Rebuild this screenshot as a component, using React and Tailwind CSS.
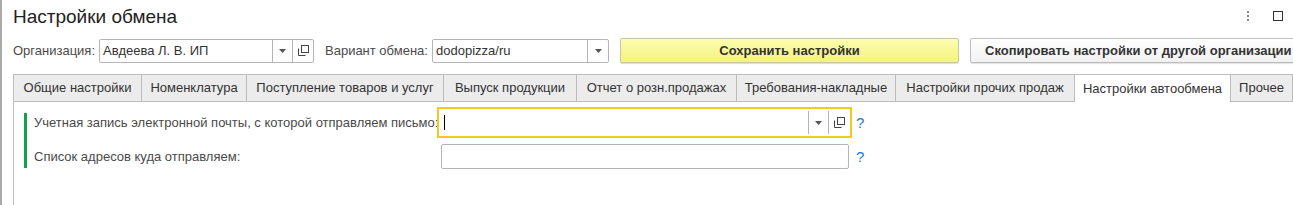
import React from "react";

const tabs = [
  { label: "Общие настройки", w: 129 },
  { label: "Номенклатура", w: 105 },
  { label: "Поступление товаров и услуг", w: 197 },
  { label: "Выпуск продукции", w: 133 },
  { label: "Отчет о розн.продажах", w: 160 },
  { label: "Требования-накладные", w: 159 },
  { label: "Настройки прочих продаж", w: 179 },
  { label: "Настройки автообмена", w: 156, active: true },
  { label: "Прочее", w: 62 },
];

function DropArrow() {
  return (
    <svg width="7" height="4" viewBox="0 0 7 4">
      <path d="M0 0h7L3.5 4z" fill="#555" />
    </svg>
  );
}

function OpenIcon() {
  return (
    <svg width="11" height="11" viewBox="0 0 11 11" fill="none" stroke="#444" strokeWidth="1">
      <rect x="3.5" y="0.5" width="7" height="7" />
      <path d="M0.5 3.5v7h7" />
    </svg>
  );
}

function Help({ className = "" }) {
  return <span className={"text-[15px] leading-none text-[#1c7ad0] " + className}>?</span>;
}

export default function App() {
  return (
    <div
      className="flex h-[205px] w-[1293px] flex-col overflow-hidden border-l-2 border-[#a9a9a9] bg-white pl-[11px] text-[13px] text-[#4a4a4a]"
      style={{ fontFamily: '"Liberation Sans", Arial, sans-serif' }}
    >
      <div className="flex h-[33px] shrink-0 items-center justify-between pr-[10px]">
        <h1 className="pt-[1px] text-[19px] text-[#222]">Настройки обмена</h1>
        <div className="flex items-center gap-[24px] pb-[1px]">
          <div className="flex flex-col gap-[2px]">
            <span className="h-[2px] w-[2px] bg-[#888]" />
            <span className="h-[2px] w-[2px] bg-[#888]" />
            <span className="h-[2px] w-[2px] bg-[#888]" />
          </div>
          <span className="h-[10px] w-[10px] border border-[#333]" />
        </div>
      </div>

      <div className="mt-[5px] flex h-[25px] shrink-0 items-center">
        <span className="w-[86px] shrink-0">Организация:</span>
        <div className="flex h-[24px] w-[215px] shrink-0 items-stretch rounded-[2px] border border-[#b5b5b5] bg-white">
          <span className="flex flex-1 items-center pl-[3px] text-[#333]">Авдеева Л. В. ИП</span>
          <span className="flex w-[20px] items-center justify-center border-l border-[#b5b5b5]">
            <DropArrow />
          </span>
          <span className="flex w-[21px] items-center justify-center border-l border-[#b5b5b5]">
            <OpenIcon />
          </span>
        </div>
        <span className="ml-[11px] w-[107px] shrink-0">Вариант обмена:</span>
        <div className="flex h-[24px] w-[177px] shrink-0 items-stretch rounded-[2px] border border-[#b5b5b5] bg-white">
          <span className="flex flex-1 items-center pl-[3px] text-[#333]">dodopizza/ru</span>
          <span className="flex w-[21px] items-center justify-center border-l border-[#b5b5b5]">
            <DropArrow />
          </span>
        </div>
        <button className="ml-[11px] h-[25px] w-[339px] shrink-0 rounded-[2px] border border-[#c8c8a0] bg-gradient-to-b from-[#fdfdb0] to-[#f3f37c] font-bold text-[#333] shadow-[0_1px_1px_rgba(0,0,0,0.15)]">
          Сохранить настройки
        </button>
        <button className="ml-[11px] h-[25px] w-[340px] shrink-0 whitespace-nowrap rounded-[2px] border border-[#bdbdbd] bg-gradient-to-b from-white to-[#f0f0f0] pl-[14px] text-left font-bold text-[#333] shadow-[0_1px_1px_rgba(0,0,0,0.12)]">
          Скопировать настройки от другой организации
        </button>
      </div>

      <div className="mt-[11px] flex h-[28px] shrink-0 items-stretch">
        {tabs.map((t, i) => (
          <div
            key={t.label}
            style={{ width: t.w }}
            className={
              "flex shrink-0 items-center justify-center whitespace-nowrap border-t border-r border-[#bcbcbc] " +
              (i === 0 ? "border-l " : "") +
              (t.active ? "bg-white text-[#333]" : "border-b bg-[#ececec] text-[#333]")
            }
          >
            {t.label}
          </div>
        ))}
        <div className="flex-1 border-b border-[#bcbcbc]" />
      </div>

      <div className="flex flex-1 border-l border-[#bcbcbc] pl-[10px] pt-[5px]">
        <div className="mt-[6px] h-[55px] w-[3px] bg-[#13a04a]" />
        <div className="flex flex-col pl-[7px]">
          <div className="flex h-[31px] items-center">
            <span className="w-[403px] shrink-0 whitespace-nowrap">
              Учетная запись электронной почты, с которой отправляем письмо:
            </span>
            <div className="flex h-[31px] w-[415px] shrink-0 items-stretch border-2 border-[#f7c81e] bg-white py-[2px]">
              <span className="flex flex-1 items-center pl-[5px]">
                <span className="h-[15px] w-px bg-[#000]" />
              </span>
              <span className="flex w-[20px] items-center justify-center border-l border-[#b5b5b5]">
                <DropArrow />
              </span>
              <span className="flex w-[22px] items-center justify-center border-l border-[#b5b5b5]">
                <OpenIcon />
              </span>
            </div>
            <Help className="ml-[4px]" />
          </div>
          <div className="mt-[6px] flex h-[25px] items-center">
            <span className="w-[407px] shrink-0 whitespace-nowrap">Список адресов куда отправляем:</span>
            <div className="h-[25px] w-[408px] shrink-0 rounded-[2px] border border-[#b5b5b5] bg-white" />
            <Help className="ml-[7px]" />
          </div>
        </div>
      </div>
    </div>
  );
}
